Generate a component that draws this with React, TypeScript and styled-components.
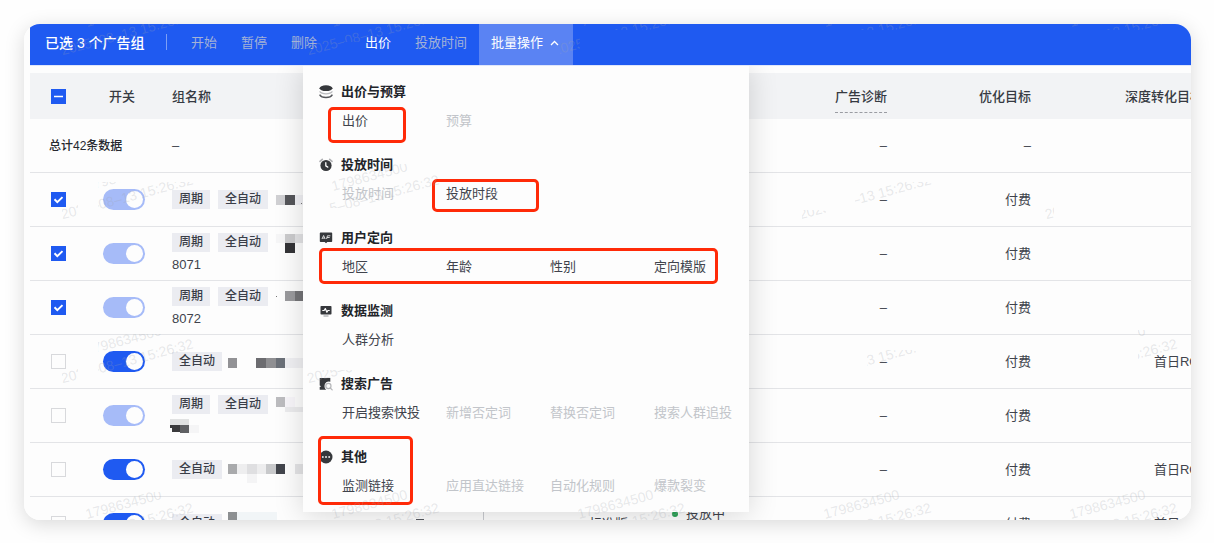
import React from 'react';
import styled, { createGlobalStyle } from 'styled-components';

const BLUE = '#1f5af1';

const GlobalStyle = createGlobalStyle`
  * { box-sizing: border-box; }
  body {
    margin: 0;
    background: #fefefe;
    color: #40434c;
    font-family: "Liberation Sans", "Noto Sans CJK SC", sans-serif;
    font-size: 13px;
    line-height: 20px;
  }
  button, input { font: inherit; margin: 0; }
`;

const Page = styled.main`
  height: 100vh;
  padding: 24px 23px 23px 24px;
  overflow: hidden;
`;

const Card = styled.section`
  position: relative;
  height: 100%;
  padding-left: 6px;
  overflow: hidden;
  border-radius: 16px;
  background: #fdfdfd;
`;

const CardShadow = styled.div`
  height: 100%;
  border-radius: 16px;
  box-shadow: 0 4px 20px rgba(0, 0, 0, 0.15);
`;

const Toolbar = styled.div`
  display: flex;
  align-items: stretch;
  height: 42px;
  padding-left: 15px;
  background: ${BLUE};
  border-bottom: 1px solid #dfe6fa;
`;

const Selected = styled.span`
  display: flex;
  align-items: center;
  width: 121px;
  padding-bottom: 4px;
  color: #fff;
  font-size: 14px;
  font-weight: 500;
  white-space: pre;
`;

const Divider = styled.span`
  width: 1px;
  height: 16px;
  margin: 10px 12px 0 0;
  background: #7d9ff5;
`;

const ToolButton = styled.button<{ $tone?: 'muted' | 'normal' | 'active'; $spaced?: boolean }>`
  display: flex;
  align-items: center;
  gap: 7px;
  margin-left: ${(p) => (p.$spaced ? '24px' : '0')};
  padding: 0 12px 4px;
  border: 0;
  background: ${(p) => (p.$tone === 'active' ? '#5a83f3' : 'transparent')};
  color: ${(p) => (p.$tone === 'muted' ? '#a4b2d6' : '#fff')};
  white-space: nowrap;
`;

const ActiveButton = styled(ToolButton)`
  width: 94px;
`;

const TableWrap = styled.div`
  padding-top: 7px;
`;

const Table = styled.table`
  width: calc(100% + 28px);
  table-layout: fixed;
  border-collapse: separate;
  border-spacing: 0;
`;

const HeadCell = styled.th<{ $right?: boolean }>`
  height: 46px;
  padding: 1px ${(p) => (p.$right ? '16px' : '0')} 0 0;
  background: #f2f3f5;
  color: #363a42;
  font-weight: 500;
  text-align: ${(p) => (p.$right ? 'right' : 'left')};
  white-space: nowrap;
`;

const HintLabel = styled.span`
  display: inline-block;
  padding: 5px 0;
  border-bottom: 1px dashed #9a9ca2;
  border-top: 1px solid transparent;
`;

const Cell = styled.td<{ $right?: boolean; $divided?: boolean }>`
  height: 54px;
  padding: 0 ${(p) => (p.$right ? '16px' : '0')} 0 0;
  border-bottom: 1px solid #e3e4e7;
  border-right: ${(p) => (p.$divided ? '1px solid #c9cbd0' : '0')};
  text-align: ${(p) => (p.$right ? 'right' : 'left')};
  white-space: nowrap;
`;

const TotalCell = styled(Cell)`
  padding-left: 19px;
  color: #26282e;
  font-size: 12px;
  font-weight: 500;
`;

const Tick = styled.label`
  position: relative;
  display: block;
  width: 15px;
  height: 15px;
  margin-left: 21px;
`;

const TickInput = styled.input`
  appearance: none;
  display: block;
  width: 15px;
  height: 15px;
  border: 1px solid #d8d9dc;
  background: #fdfdfd;
  &:checked, &[data-mixed='true'] {
    border-color: ${BLUE};
    background: ${BLUE};
  }
`;

const TickMark = styled.svg`
  position: absolute;
  inset: 0;
  pointer-events: none;
`;

const Switch = styled.input<{ $soft?: boolean }>`
  appearance: none;
  display: flex;
  align-items: center;
  justify-content: flex-end;
  width: 42px;
  height: 21px;
  padding: 2px;
  border-radius: 11px;
  background: ${(p) => (p.$soft ? '#a6bbf8' : BLUE)};
  &::before {
    content: '';
    width: 17px;
    height: 17px;
    border-radius: 50%;
    background: #fdfdfd;
  }
`;

const HeadSwitchLabel = styled.span`
  padding-left: 6px;
`;

const Name = styled.div`
  display: flex;
  flex-direction: column;
  gap: 2px;
`;

const TagRow = styled.div`
  display: flex;
  align-items: center;
  gap: 8px;
  height: 20px;
`;

const Tag = styled.span`
  padding: 0 7px;
  background: #ebecf1;
  color: #3a3e48;
  font-size: 12px;
  font-weight: 500;
  line-height: 19px;
`;

const NameText = styled.span`
  height: 20px;
`;

const Mosaic = styled.svg`
  display: block;
  overflow: visible;
`;

const Status = styled.div`
  display: flex;
  align-items: center;
  gap: 8px;
  height: 20px;
  margin: 0 0 20px 28px;
`;

const Dot = styled.span`
  width: 6px;
  height: 6px;
  border-radius: 50%;
  background: #2aa455;
`;

const Menu = styled.div`
  position: absolute;
  top: 42px;
  left: 279px;
  display: flex;
  flex-direction: column;
  gap: 24px;
  width: 446px;
  padding: 16px 0 16px 16px;
  background: #fdfdfd;
  box-shadow: 0 2px 28px rgba(0, 0, 0, 0.16);
  clip-path: inset(0 -40px -40px -40px);
`;

const Group = styled.section`
  position: relative;
`;

const GroupTitle = styled.h3`
  display: flex;
  align-items: center;
  gap: 8px;
  height: 20px;
  margin: 0 0 9px;
  color: #222429;
  font-size: 13px;
  font-weight: 700;
  line-height: 20px;
`;

const Options = styled.div`
  display: grid;
  grid-template-columns: repeat(4, 104px);
  padding-left: 23px;
`;

const Option = styled.button`
  height: 20px;
  padding: 0;
  border: 0;
  background: none;
  color: #40434c;
  text-align: left;
  white-space: nowrap;
  &:disabled { color: #c2c5ca; }
`;

const Highlight = styled.span<{ $x: number; $y: number; $w: number; $h: number }>`
  position: absolute;
  left: ${(p) => p.$x}px;
  top: ${(p) => p.$y}px;
  width: ${(p) => p.$w}px;
  height: ${(p) => p.$h}px;
  border: 3px solid #ff2a08;
  border-radius: 5px;
  pointer-events: none;
`;

const WatermarkLayer = styled.svg`
  position: absolute;
  inset: 0;
  width: 100%;
  height: 100%;
  pointer-events: none;
`;

const iconProps = { width: 14, height: 14, viewBox: '0 0 14 14', fill: 'none', 'aria-hidden': true } as const;

const icons: Record<string, React.ReactNode> = {
  coins: (
    <svg {...iconProps}>
      <ellipse cx="7" cy="3.2" rx="6.5" ry="2.9" fill="#36383c" />
      <path d="M.6 6.4C1.8 8 4.2 8.8 7 8.8s5.200-.8 6.400-2.400" stroke="#b9babd" strokeWidth="1.200" />
      <path d="M.6 9.600c1 1.900 3.500 2.900 6.400 2.900s5.400-1 6.400-2.900" stroke="#55575b" strokeWidth="1.500" />
    </svg>
  ),
  clock: (
    <svg {...iconProps}>
      <path d="M1 3.400 3.300 1.300M13 3.400l-2.300-2.100" stroke="#b0b1b4" strokeWidth="1.600" strokeLinecap="round" />
      <circle cx="7" cy="7.500" r="5.600" fill="#36383c" />
      <path d="M6.800 4.700v3.100l2 1.300" stroke="#fff" strokeWidth="1.300" strokeLinecap="round" />
    </svg>
  ),
  board: (
    <svg {...iconProps}>
      <path d="M1.600 1.500h10.800c.5 0 .8.300.8.800v7.900c0 .5-.3.800-.8.800H8.300L7 12.300 5.700 11H1.600a.8.8 0 0 1-.8-.8V2.300c0-.5.300-.8.800-.8Z" fill="#36383c" />
      <path d="m3 8 1.600-3.500L6.100 8M3.600 7.100h2M7.600 8l.8-3.200h3M8 6.500h2.700" stroke="#e8e8e9" strokeWidth=".9" />
    </svg>
  ),
  monitor: (
    <svg {...iconProps}>
      <rect x="1.500" y="2" width="11" height="8.600" rx=".8" fill="#36383c" />
      <path d="M4.500 12h5" stroke="#a5a6a9" strokeWidth="1.200" />
      <path d="M3.300 6.500h1.800l1.200-1.900 1.600 3.700 1-1.800h1.800" stroke="#fff" strokeWidth="1.200" strokeLinejoin="round" />
    </svg>
  ),
  search: (
    <svg {...iconProps}>
      <path d="M.7 1h10.600v3.700A4.300 4.300 0 0 0 5.500 9c0 1.700.6 2.900 1.700 3.800H.7V10l1.500-.8L.7 8.500Z" fill="#36383c" />
      <circle cx="9.400" cy="9" r="2.600" stroke="#b4b5b8" strokeWidth="1.200" />
      <path d="m11.300 11 1.900 1.900" stroke="#b4b5b8" strokeWidth="1.200" strokeLinecap="round" />
    </svg>
  ),
  more: (
    <svg {...iconProps}>
      <circle cx="7" cy="7" r="6.500" fill="#36383c" />
      <circle cx="3.800" cy="7" r="1" fill="#e8e8e9" />
      <circle cx="7" cy="7" r="1" fill="#e8e8e9" />
      <circle cx="10.200" cy="7" r="1" fill="#e8e8e9" />
    </svg>
  ),
};

type Box = [number, number, number, number];

const groups: { icon: string; title: string; items: [string, boolean][]; box?: Box }[] = [
  { icon: 'coins', title: '出价与预算', items: [['出价', true], ['预算', false]], box: [9, 25, 78, 36] },
  { icon: 'clock', title: '投放时间', items: [['投放时间', false], ['投放时段', true]], box: [113, 24, 107, 33] },
  { icon: 'board', title: '用户定向', items: [['地区', true], ['年龄', true], ['性别', true], ['定向模版', true]], box: [0, 20, 399, 36] },
  { icon: 'monitor', title: '数据监测', items: [['人群分析', true]] },
  { icon: 'search', title: '搜索广告', items: [['开启搜索快投', true], ['新增否定词', false], ['替换否定词', false], ['搜索人群追投', false]] },
  { icon: 'more', title: '其他', items: [['监测链接', true], ['应用直达链接', false], ['自动化规则', false], ['爆款裂变', false]], box: [-1, -11, 95, 69] },
];

// x, y, width, height, fill of each masked block
type Block = [number, number, number, number, string];

interface Row {
  checked: boolean;
  soft: boolean;
  tags: string[];
  text?: string;
  blocks: Block[];
  under?: Block[];
  mode?: string;
  status?: string;
  deep: string;
}

const rows: Row[] = [
  { checked: true, soft: true, tags: ['周期', '全自动'], deep: '', blocks: [[0, 5, 9, 10, '#d0d0d3'], [9, 5, 10, 10, '#55565a'], [19, 5, 8, 10, '#f1f1f5'], [25, 13, 1, 1, '#777']] },
  { checked: true, soft: true, tags: ['周期', '全自动'], text: '8071', deep: '', blocks: [[0, 1, 9, 9, '#f6f6f7'], [9, 1, 10, 9, '#cbcbcd'], [9, 10, 10, 10, '#343437'], [19, 1, 8, 9, '#e3e3e5']] },
  { checked: true, soft: true, tags: ['周期', '全自动'], text: '8072', deep: '', blocks: [[0, 9, 1, 1, '#777'], [9, 4, 10, 10, '#9a9a9d'], [19, 4, 8, 10, '#747477']] },
  { checked: false, soft: false, tags: ['全自动'], deep: '首日ROI', blocks: [[-2, 6, 9, 10, '#929295'], [26, 6, 10, 10, '#6c6c70'], [36, 6, 10, 10, '#8f8f92'], [46, 6, 9, 10, '#6b7078'], [55, 6, 18, 10, '#f0f0f3']] },
  { checked: false, soft: true, tags: ['周期', '全自动'], deep: '', blocks: [[0, 2, 9, 10, '#bcbcbf'], [9, 2, 10, 10, '#f8f6fa'], [9, 12, 18, 5, '#ececee']], under: [[-2, 2, 19, 6, '#e1e2e2'], [-2, 8, 10, 3, '#3b3b3d'], [0, 11, 8, 4, '#3b3b3d'], [8, 8, 9, 8, '#606164'], [17, 8, 10, 8, '#f5f5f6']] },
  { checked: false, soft: false, tags: ['全自动'], deep: '首日ROI', blocks: [[-2, 4, 9, 10, '#a9aaac'], [7, 4, 10, 10, '#eeeeef'], [17, 4, 10, 10, '#dfdfe1'], [27, 4, 9, 10, '#ededee'], [36, 4, 10, 10, '#c8c9cb'], [46, 4, 9, 10, '#42454c'], [65, 4, 10, 10, '#e4e4e6'], [17, 14, 10, 9, '#f4f4f5']] },
  { checked: false, soft: false, tags: ['全自动'], mode: '标准版', status: '投放中', deep: '首日ROI', blocks: [[-2, -2, 9, 9, '#8d9092'], [7, -2, 40, 9, '#f1f5f7'], [186, 5, 8, 1, '#55585f']] },
];

const Blocks = ({ list }: { list: Block[] }) => (
  <Mosaic width={27} height={20} aria-hidden="true">
    {list.map(([x, y, w, h, fill], i) => (
      <rect key={i} x={x} y={y} width={w} height={h} fill={fill} />
    ))}
  </Mosaic>
);

const Checkbox = ({ checked, mixed, label }: { checked: boolean; mixed?: boolean; label: string }) => (
  <Tick>
    <TickInput type="checkbox" defaultChecked={checked} data-mixed={mixed} aria-label={label} />
    <TickMark viewBox="0 0 15 15" fill="none" stroke="#fff" strokeWidth="2">
      {mixed ? <path d="M3 7.500h9" strokeWidth="1.500" /> : checked && <path d="m3.500 7.300 2.800 2.800 5.200-5" />}
    </TickMark>
  </Tick>
);

// areas of the card in which the watermark shows
const visibleAreas: Box[] = [
  [38, 0, 282, 44], [320, 0, 36, 18], [356, 0, 60, 12], [536, 12, 20, 24], [560, 0, 590, 6],
  [74, 158, 124, 34], [38, 180, 16, 18], [74, 310, 124, 46], [38, 342, 16, 22], [50, 468, 150, 28],
  [305, 140, 128, 44], [281, 346, 50, 16], [305, 456, 140, 40], [550, 466, 150, 30],
  [831, 158, 80, 32], [843, 326, 50, 20], [778, 186, 24, 14], [780, 466, 150, 30],
  [1114, 306, 66, 50], [1040, 466, 127, 30], [1020, 180, 10, 16],
];

const Watermark = () => (
  <WatermarkLayer aria-hidden="true">
    <defs>
      <clipPath id="visible">
        {visibleAreas.map(([x, y, w, h], i) => (
          <rect key={i} x={x} y={y} width={w} height={h} />
        ))}
      </clipPath>
    </defs>
    <g clipPath="url(#visible)" fill="#a0a4ac" fillOpacity="0.24" fontSize="14" fontFamily="Liberation Sans, sans-serif">
      {[0, 1, 2, 3].map((r) =>
        [0, 1, 2, 3, 4].map((c) => (
          <g key={`${r}-${c}`} transform={`translate(${63 + c * 246} ${3 + r * 164}) rotate(-15)`}>
            <text>1798634500</text>
            <text x="-31" y="21">2025–08–13 15:26:32</text>
          </g>
        )),
      )}
    </g>
  </WatermarkLayer>
);

const App = () => (
  <>
    <GlobalStyle />
    <Page>
      <CardShadow>
        <Card>
          <Toolbar>
            <Selected>已选 3 个广告组</Selected>
            <Divider />
            <ToolButton $tone="muted">开始</ToolButton>
            <ToolButton $tone="muted">暂停</ToolButton>
            <ToolButton $tone="muted">删除</ToolButton>
            <ToolButton $spaced>出价</ToolButton>
            <ToolButton $tone="muted">投放时间</ToolButton>
            <ActiveButton $tone="active" aria-expanded="true">
              批量操作
              <svg width="9" height="6" viewBox="0 0 9 6" fill="none" stroke="#fff" strokeWidth="1.300" aria-hidden="true">
                <path d="m1 5 3.500-3.500L8 5" />
              </svg>
            </ActiveButton>
          </Toolbar>
          <TableWrap>
            <Table>
              <colgroup>
                <col style={{ width: 73 }} />
                <col style={{ width: 69 }} />
                <col style={{ width: 312 }} />
                <col style={{ width: 160 }} />
                <col />
                <col style={{ width: 160 }} />
                <col style={{ width: 144 }} />
                <col style={{ width: 172 }} />
              </colgroup>
              <thead>
                <tr>
                  <HeadCell><Checkbox checked={false} mixed label="全选" /></HeadCell>
                  <HeadCell><HeadSwitchLabel>开关</HeadSwitchLabel></HeadCell>
                  <HeadCell>组名称</HeadCell>
                  <HeadCell />
                  <HeadCell />
                  <HeadCell $right><HintLabel>广告诊断</HintLabel></HeadCell>
                  <HeadCell $right>优化目标</HeadCell>
                  <HeadCell $right>深度转化目标</HeadCell>
                </tr>
              </thead>
              <tbody>
                <tr>
                  <TotalCell colSpan={2}>总计42条数据</TotalCell>
                  <Cell $divided>–</Cell>
                  <Cell />
                  <Cell />
                  <Cell $right>–</Cell>
                  <Cell $right>–</Cell>
                  <Cell />
                </tr>
                {rows.map((row, i) => (
                  <tr key={i}>
                    <Cell><Checkbox checked={row.checked} label={`选择第${i + 1}行`} /></Cell>
                    <Cell><Switch type="checkbox" role="switch" defaultChecked $soft={row.soft} aria-label="开关" /></Cell>
                    <Cell $divided>
                      <Name>
                        <TagRow>
                          {row.tags.map((t) => <Tag key={t}>{t}</Tag>)}
                          <Blocks list={row.blocks} />
                        </TagRow>
                        {row.text && <NameText>{row.text}</NameText>}
                        {row.under && <Blocks list={row.under} />}
                      </Name>
                    </Cell>
                    <Cell $right>{row.mode}</Cell>
                    <Cell>{row.status && <Status><Dot />{row.status}</Status>}</Cell>
                    <Cell $right>–</Cell>
                    <Cell $right>付费</Cell>
                    <Cell $right>{row.deep}</Cell>
                  </tr>
                ))}
              </tbody>
            </Table>
          </TableWrap>
          <Menu>
            {groups.map((g) => (
              <Group key={g.title}>
                <GroupTitle>{icons[g.icon]}{g.title}</GroupTitle>
                <Options>
                  {g.items.map(([label, enabled]) => (
                    <Option key={label} disabled={!enabled}>{label}</Option>
                  ))}
                </Options>
                {g.box && <Highlight $x={g.box[0]} $y={g.box[1]} $w={g.box[2]} $h={g.box[3]} />}
              </Group>
            ))}
          </Menu>
          <Watermark />
        </Card>
      </CardShadow>
    </Page>
  </>
);

export default App;
